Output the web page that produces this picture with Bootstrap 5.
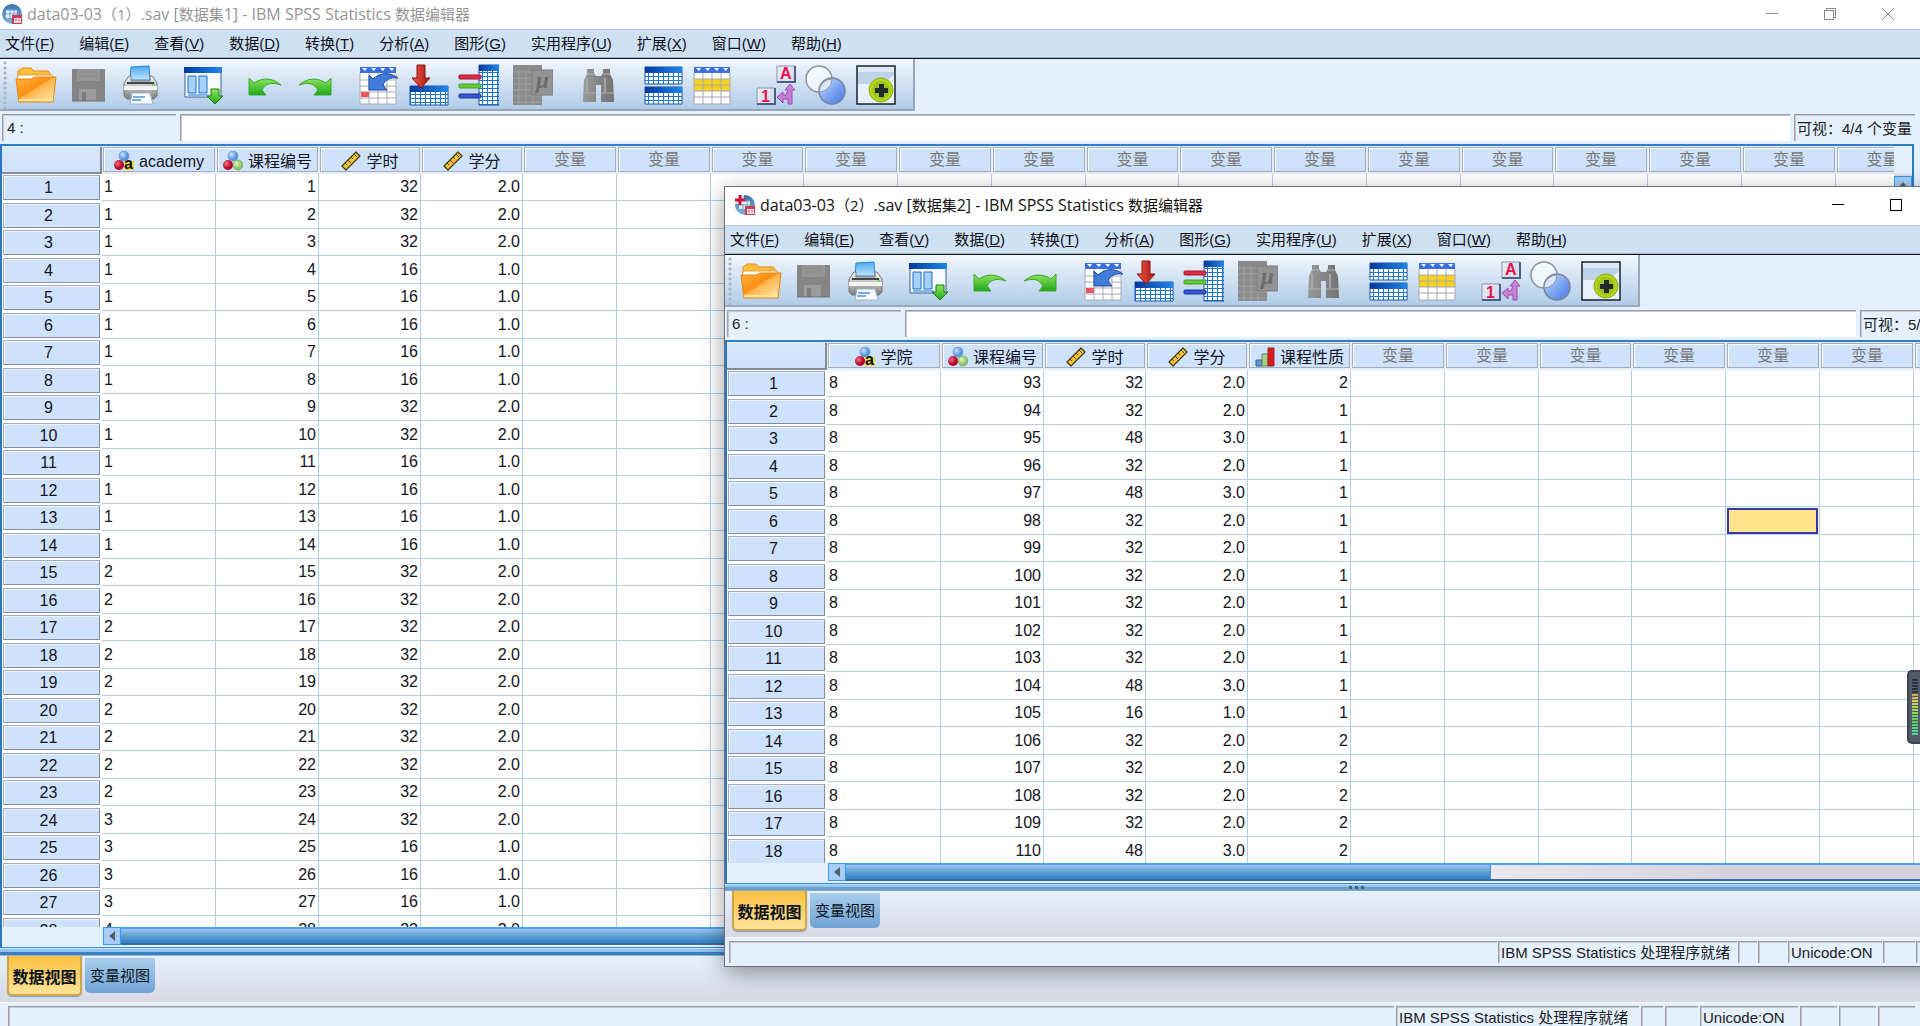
<!DOCTYPE html>
<html lang="zh-CN">
<head>
<meta charset="utf-8">
<meta name="viewport" content="width=device-width, initial-scale=1">
<title>IBM SPSS Statistics 数据编辑器</title>
<link href="https://cdn.jsdelivr.net/npm/bootstrap@5.3.0/dist/css/bootstrap.min.css" rel="stylesheet">
<style>
  :root { --pane: #e4f0fc; --line: #b0cdea; --head: #cfe2fb; --edge: #9ba0a8; }
  body { height: 100vh; overflow: hidden; background: var(--pane); color: #14141e;
         font: 15px/20px "Liberation Sans", "Noto Sans CJK SC", sans-serif; }
  button { color: inherit; font: inherit; }
  .win { background: var(--pane); }
  .win-front { position: absolute; left: 725px; top: 187px; right: -66px; bottom: 60px; z-index: 2;
         box-shadow: 0 0 0 1px #6d7077, 0 6px 22px rgba(0,0,0,.42); }
  .titlebar { height: 29px; background: #fff; color: #959595; padding: 0 3px 2px 2px;
         font-family: "Open Sans", "Noto Sans CJK SC", sans-serif; font-size: 15px; }
  .titlebar span { font-size: 16px; }
  .caption-text { padding-left: 5px; }
  .win-front .titlebar { height: 38px; color: #111; padding-left: 10px; }
  .ctl { width: 58px; height: 26px; border: 0; background: none; padding: 0; line-height: 0; }
  .menubar { height: 30px; background: #cee1f2; border-top: 1px solid #b3cade; border-bottom: 1px solid #14181c;
         box-shadow: inset 0 -1px #9db4cb; padding-left: 5px; gap: 25px; }
  .menubar a { color: #101018; text-decoration: none; white-space: nowrap; }
  .tools { height: 52px; align-self: flex-start; gap: 20px; padding: 2px 16px 0 3px;
         background: linear-gradient(#f2f7fd, #d3e3f4 45%, #b1cce8); border-right: 2px solid #99a7b7; border-bottom: 2px solid #99a7b7; }
  .grip { width: 4px; height: 48px; margin-right: -12px; background: radial-gradient(circle at 2px 2px, #a9b5c3 1px, transparent 2px) 0 0/4px 5px; }
  .tgroup { gap: 8px; }
  .tgroup-wide { gap: 10px; }
  .tool { width: 42px; height: 42px; padding: 0; border: 0; background: none; line-height: 0; }
  .formula { height: 33px; padding: 3px 5px 3px 2px; gap: 4px; }
  .sunk { border: 0; border-top: 1px solid var(--edge); border-left: 1px solid var(--edge); border-radius: 0;
         box-shadow: inset 1px 1px #c3c7cc; background: var(--pane); color: #202028; padding: 0 4px; font: inherit; outline: 0; }
  .cellref { width: 174px; }
  .formula .entry { background-color: #fff; }
  .visible-vars { width: 121px; padding-left: 2px; line-height: 28px; white-space: nowrap; overflow: hidden; }
  .gridbox { margin-right: 6px; border: 2px solid #2a78c4; border-top-color: #2c7fce; border-bottom: 0; background: #fff; }
  .sheet { table-layout: fixed; border-collapse: separate; border-spacing: 0; width: 0; font-size: 16px; }
  .sheet th, .sheet td { padding: 0; font-weight: 400; white-space: nowrap; }
  .sheet thead th { height: 28px; background: #e6edf5; }
  .cap { height: 25px; margin: 1px 1px 2px 1px; background: var(--head); gap: 5px; line-height: 23px;
         border: 1px solid #a3adbd; box-shadow: inset 1px 1px #fff; }
  .cap-var { padding-top: 3px; }
  .cap-blank { color: #777; }
  .corner { height: 27px; background: linear-gradient(#d8e8fb, var(--head)); border-right: 2px solid #848c98; border-bottom: 2px solid #848c98; }
  .sheet tbody tr { height: 27px; }
  .sheet tbody tr:nth-child(even) { height: 28px; }
  .sheet tbody td { border-right: 1px solid var(--line); border-bottom: 1px solid var(--line); padding: 0 2px; line-height: 24px; text-align: right; }
  .sheet tbody td.txt { text-align: left; }
  .rowno { height: 25px; margin: 0 2px 0 1px; background: var(--head); border: 1px solid #a3adbd; border-right-color: #858e9e; border-bottom-color: #858e9e;
         box-shadow: inset 1px 1px #eef5ff; text-align: center; line-height: 24px; padding-right: 6px; }
  .sheet tbody td.picked { padding: 0 1px; }
  .picked div { height: 26px; background: #fee58c; border: 2px solid #3a36ac; }
  .vscroll { width: 18px; background: #dcdce6; }
  .vscroll .spare { height: 28px; background: var(--pane); }
  .arrow { width: 18px; height: 18px; border: 1px solid #3399f5; background: #a5cdf8; padding: 0; line-height: 0; }
  .hscroll { height: 20px; padding: 0 0 2px 101px; background: var(--pane); }
  .track { background: linear-gradient(90deg, #f1eff4 50%, #d5d2dd 78%); border-top: 2px solid #48a2f6; border-bottom: 2px solid #3a6aa0; }
  .thumb { height: 14px; background: linear-gradient(#9cc4e6, #5f9fd4 50%, #3480c2); border-right: 1px solid #3c93e2; }
  .win-front .thumb { width: 57%; }
  .splitter { height: 9px; background: linear-gradient(#3c8bd4 0 1px, #c5e8ff 1px 2px, #8ec4f7 2px 5px, #3e7fbf 5px 8px, #8fb5d9 8px); line-height: 0; }
  .win-front .splitter { height: 8px; background: linear-gradient(#3c8bd4 0 1px, #b0dcff 1px 2px, #93c7f7 2px 4px, #6f9cc9 4px 7px, #7da8d3 7px); }
  .views { height: 46px; padding-left: 7px; gap: 3px; background: linear-gradient(#e5f1fd, #d9d8e5); }
  .view { height: 35px; width: 70px; border: 0; background: linear-gradient(#a9cdec, #70a3d3); border-radius: 0 0 5px 5px; color: #0b1420; padding: 0; margin-top: 2px; white-space: nowrap; }
  .view.on { height: 40px; width: 75px; margin-top: 0; font-weight: 700; font-size: 16px; padding-top: 6px;
         background: linear-gradient(#fdc040, #fee29a); border: 2px solid #d0a645; border-top: 0; box-shadow: 0 1px 1px #6fa4d6; }
  .status { height: 24px; padding: 3px 5px 0 8px; gap: 2px; border-top: 1px solid #f4f9ff; }
  .status .sunk { height: 21px; padding-left: 2px; line-height: 22px; white-space: nowrap; }
  .win-front .status { height: 29px; padding: 3px 5px 4px 4px; gap: 1px; }
  .win-front .status .sunk { height: 22px; }
  .s-proc { width: 243px; } .s-a { width: 22px; } .s-b { width: 33px; } .s-uni { width: 98px; } .s-c { width: 37px; }
  .win-front .s-proc { width: 239px; } .win-front .s-a { width: 19px; } .win-front .s-b { width: 29px; }
  .win-front .s-uni { width: 94px; } .win-front .s-c { width: 32px; }
  .t-mu { font: italic 700 23px "Liberation Serif", serif; fill: #6a6a6a; }
  .t-tile { font: 700 16px "Liberation Sans", sans-serif; fill: #e80f50; }
  .t-a { font: 700 16px "Liberation Sans", sans-serif; fill: #111; }
  .meter { position: absolute; right: 0; top: 670px; width: 13px; height: 74px; z-index: 3; background: #555a6b; border: 2px solid #3f4352; border-right: 0;
         border-radius: 5px 0 0 5px; padding: 7px 0 0 3px; }
  .meter i { display: block; height: 2px; width: 6px; margin-bottom: 1px; }
</style>
</head>
<body>

<svg width="0" height="0" class="position-absolute" aria-hidden="true">
  <defs>
    <linearGradient id="gOrange" x2="1" y2="1"><stop stop-color="#ffb340"/><stop offset=".45" stop-color="#ff8f12"/><stop offset=".5" stop-color="#ffb64d"/><stop offset="1" stop-color="#ffeab0"/></linearGradient>
    <linearGradient id="gBlue"><stop stop-color="#05389c"/><stop offset="1" stop-color="#1f86e8"/></linearGradient>
    <linearGradient id="gGreen" x2="0" y2="1"><stop stop-color="#8fe85e"/><stop offset="1" stop-color="#1fa51a"/></linearGradient>
    <linearGradient id="gRed"><stop stop-color="#f0604c"/><stop offset="1" stop-color="#a30f0f"/></linearGradient>
    <linearGradient id="gPaper" x2="0" y2="1"><stop stop-color="#4aa8f2"/><stop offset="1" stop-color="#c3e6ff"/></linearGradient>
    <linearGradient id="gMetal" x2="0" y2="1"><stop stop-color="#f7f7f7"/><stop offset=".5" stop-color="#bdbdbd"/><stop offset="1" stop-color="#7d7d7d"/></linearGradient>
    <linearGradient id="gGray"><stop stop-color="#9b9b9b"/><stop offset=".5" stop-color="#858585"/><stop offset="1" stop-color="#737373"/></linearGradient>
    <linearGradient id="gGlobe" x2="0" y2="1"><stop stop-color="#3973a6"/><stop offset="1" stop-color="#86b5dd"/></linearGradient>
    <radialGradient id="bBlue" cx=".35" cy=".35"><stop stop-color="#c9e2ff"/><stop offset="1" stop-color="#5596e0"/></radialGradient>
    <radialGradient id="bRed" cx=".35" cy=".35"><stop stop-color="#f0708a"/><stop offset="1" stop-color="#b5001f"/></radialGradient>
    <radialGradient id="bGreen" cx=".35" cy=".35"><stop stop-color="#e2f7c4"/><stop offset="1" stop-color="#8cc465"/></radialGradient>
    <linearGradient id="gLens" x2="1" y2="1"><stop stop-color="#c4dcff"/><stop offset="1" stop-color="#3f74e4"/></linearGradient>
    <linearGradient id="gTile" x2="1" y2="1"><stop stop-color="#fff"/><stop offset="1" stop-color="#b9c6dc"/></linearGradient>
    <pattern id="pGrid" width="5" height="4" patternUnits="userSpaceOnUse"><path fill="#1d78d4" d="M0 0h5v4H0z"/><path fill="#fff" d="M1 1h4v3H1z"/></pattern>
  </defs>
  <symbol id="i-open" viewBox="0 0 42 42"><path d="M3 20V7l4-3h9l3 3h14l2 2v10z" fill="#ffbf3a" stroke="#e58a12"/><path d="M3 11h34l1 7H2z" fill="#fff" stroke="#e89a40"/><path d="M1 15h15l4-2h21l-3 25H4z" fill="url(#gOrange)" stroke="#ec8412"/><path d="M4 36h33" stroke="#ffe7a2" stroke-width="2"/></symbol>
  <symbol id="i-save" viewBox="0 0 42 42"><path d="M5 5h33v32H5z" fill="#858585"/><path d="M10 5h23v12H10z" fill="#959595"/><path d="M13 8h17M13 12h17" stroke="#878787"/><path d="M12 25h17v12H12z" fill="#9c9c9c"/><path d="M15 28h4v9h-4z" fill="#7d7d7d"/><path d="M5 37h33" stroke="#6f6f6f"/></symbol>
  <symbol id="i-print" viewBox="0 0 42 42"><path d="M12 3l18-1 1 14H11z" fill="url(#gPaper)" stroke="#2d86d2"/><path d="M5 19l5-7h2v5h19v-5h2l5 7v13l-3 3H8l-3-3z" fill="url(#gMetal)" stroke="#777"/><path d="M8 19h27" stroke="#444" stroke-width="2"/><path d="M5 22h33v4H5z" fill="#f3f3f3"/><path d="M33 20h3v2h-3z" fill="#6fe04c"/><path d="M13 29h18l3 11H11z" fill="#f6fbff" stroke="#9fb4c6"/><path d="M14 33h12M13 36h9" stroke="#79aede" stroke-width="2"/></symbol>
  <symbol id="i-vars" viewBox="0 0 42 42"><path d="M4 4h36v29H4z" fill="#f8fbff" stroke="#3a5f9c"/><path d="M3 3h38v6H3z" fill="url(#gBlue)"/><path d="M7 12h8v17H7zM18 12h8v17h-8z" fill="#a4d2fb" stroke="#1b71c8"/><path d="M7 31h21" stroke="#1b71c8"/><path d="M30 25h8v7h4l-8 8-8-8h4z" fill="url(#gGreen)" stroke="#147a12"/></symbol>
  <symbol id="i-undo" viewBox="0 0 42 42"><path d="M6 14l5 5c9-6 19-5 27 2-9-3-15-2-19 5l4 5H6z" fill="url(#gGreen)" stroke="#3fa62c" stroke-linejoin="round"/></symbol>
  <symbol id="i-goto" viewBox="0 0 42 42"><path d="M3 3h36v37H3z" fill="#fff"/><path d="M3 3h36v6H3z" fill="#3a6fe0"/><path d="M5 4h5l-2 3zM14 4h5l-2 3zM23 4h5l-2 3zM32 4h5l-2 3z" fill="#fff"/><path d="M3 9v31h36V9M3 16h36M3 22h36M3 28h36M3 34h36M12 9v31M21 9v31M30 9v31" fill="none" stroke="#a9acb8"/><path d="M4 28h8v5H4z" fill="#f0525f"/><path d="M12 11l4 4c8-7 17-7 25-1-8-1-13 2-15 7l4 5H12z" fill="#3f7ddb" stroke="#214f9f"/></symbol>
  <symbol id="i-insert" viewBox="0 0 42 42"><g transform="translate(3 22)"><path d="M0 0h38v19H0z" fill="url(#pGrid)" stroke="#1a54a6"/><path d="M0 0h38v6H0z" fill="url(#gBlue)"/></g><path d="M10 1h8v13h5l-9 10-9-10h5z" fill="url(#gRed)" stroke="#8c1010"/></symbol>
  <symbol id="i-var" viewBox="0 0 42 42"><path d="M22 1h20v40H22z" fill="url(#pGrid)" stroke="#1a54a6"/><path d="M22 1h20v6H22z" fill="url(#gBlue)"/><rect x="2" y="11" width="22" height="4" rx="1" fill="#dd2b45" stroke="#a91631"/><rect x="2" y="20" width="22" height="4" rx="1" fill="#62cb3b" stroke="#3f9d25"/><rect x="2" y="30" width="22" height="4" rx="1" fill="#3557d0" stroke="#1e37a0"/></symbol>
  <symbol id="i-mu" viewBox="0 0 42 42"><path d="M2 1h29v40H2z" fill="#8b8b8b"/><path d="M2 8h29M2 14h29M2 20h29M2 26h29M2 32h29M2 38h29M8 6v35M15 6v35M22 6v35" stroke="#a3a3a3"/><path d="M21 6h21v25H21z" fill="#939393" stroke="#7c7c7c"/></symbol>
  <symbol id="i-find" viewBox="0 0 42 42"><path d="M10 5h7v4l2 3h5l2-3V5h7v5l3 6 1 22H24V21h-5v17H6l1-22 3-6z" fill="url(#gGray)"/><path d="M7 29h12M24 29h13M10 10h7M26 10h7" stroke="#b2b2b2"/><path d="M10 14v14M28 14v14" stroke="#a5a5a5" stroke-width="2"/></symbol>
  <symbol id="i-split" viewBox="0 0 42 42"><g id="halfTable"><path d="M2 3h37v17H2z" fill="url(#pGrid)" stroke="#1a54a6"/><path d="M2 3h37v6H2z" fill="url(#gBlue)"/></g><use href="#halfTable" y="20"/></symbol>
  <symbol id="i-weight" viewBox="0 0 42 42"><path d="M1 3h36v37H1z" fill="#fff"/><path d="M1 3h36v6H1z" fill="#3a6fe0"/><path d="M3 4h5l-2 3zM12 4h5l-2 3zM21 4h5l-2 3zM30 4h5l-2 3z" fill="#fff"/><path d="M1 15h36v12H1z" fill="#f8d21c"/><path d="M1 9v31h36V9M1 15h36M1 21h36M1 27h36M1 33h36M10 9v31M19 9v31M28 9v31" fill="none" stroke="#a4a8b4"/></symbol>
  <symbol id="i-labels" viewBox="0 0 42 42"><path d="M22 2h18v16H22zM2 24h18v16H2z" fill="url(#gTile)" stroke="#8a97b2"/><path d="M40 2v16H22M20 24v16H2" fill="none" stroke="#4d5f86" stroke-width="2"/><path d="M35 20l5 6h-3v14h-4v-5h-5v4l-6-6 6-5v3h3l2-5h-3z" fill="#c780d6" stroke="#9a4fae"/></symbol>
  <symbol id="i-sets" viewBox="0 0 42 42"><circle cx="14" cy="15" r="13" fill="#f7faff" fill-opacity=".8" stroke="#8b93a0" stroke-width="1.500"/><circle cx="27" cy="27" r="13" fill="url(#gLens)" stroke="#7a8598" stroke-width="1.500"/><path d="M14 28a13 13 0 0 1 13-13 13 13 0 0 1-13 13z" fill="#dce6f5" stroke="#8b93a0"/></symbol>
  <symbol id="i-plus" viewBox="0 0 42 42"><path d="M2 2h38v38H2z" fill="#e6f1fd"/><path d="M3 3h36v8L28 20H3z" fill="#bdd3ea"/><path d="M3 3h36v5H3z" fill="#dfeaf6"/><path d="M2 2h38v38H2z" fill="none" stroke="#1c2026" stroke-width="1.500"/><circle cx="26" cy="26" r="12" fill="#b3d417" stroke="#8cab1a"/><circle cx="26" cy="26" r="9" fill="#9cc41f"/><path d="M24 20h5v4h4v5h-4v4h-5v-4h-4v-5h4z" fill="#26292c"/></symbol>
  <symbol id="i-app" viewBox="0 0 20 20"><circle cx="10" cy="10" r="10" fill="url(#gGlobe)"/><path d="M4 6h11v8H4z" fill="#e9f3fc"/><path d="M4 6h11M4 10h11M8 6v8M12 6v8" stroke="#6c9fce"/><path d="M10 11h10v9H10z" fill="#d23b57"/><path d="M12 14h7v5h-7z" fill="#fff"/><path d="M12 16h7M14 14v5M17 14v5" stroke="#e2899a"/></symbol>
  <symbol id="i-app-new" viewBox="0 0 20 20"><use href="#i-app"/><path d="M0 0h9v9H0z" fill="#fff" opacity=".7"/><path d="M5 0v10M0 5h10" stroke="#cf1238" stroke-width="3"/></symbol>
  <symbol id="m-nominal" viewBox="0 0 20 20"><circle cx="10" cy="5" r="5" fill="url(#bBlue)" stroke="#5a8cc8" stroke-width=".6"/><circle cx="5" cy="14" r="5" fill="url(#bRed)"/><circle cx="15" cy="14" r="5" fill="url(#bGreen)" stroke="#6f9f4c" stroke-width=".6"/></symbol>
  <symbol id="m-string" viewBox="0 0 20 20"><circle cx="10" cy="5" r="5" fill="url(#bBlue)" stroke="#5a8cc8" stroke-width=".6"/><circle cx="5" cy="14" r="5" fill="url(#bRed)"/><path d="M10 10h10v9H10z" fill="#f5d64a"/></symbol>
  <symbol id="m-scale" viewBox="0 0 20 20"><path d="M1 15L15 1l4 4L5 19z" fill="#f2c52c" stroke="#3f3a20" stroke-width="1.2" stroke-linejoin="round"/><path d="M4 12l2 2M7 9l3 3M10 6l2 2M13 3l3 3" stroke="#4a431f"/></symbol>
  <symbol id="m-ordinal" viewBox="0 0 20 20"><path d="M1 13h6v6H1z" fill="#5d98d8" stroke="#41648f"/><path d="M7 7h6v12H7z" fill="#a8cf85" stroke="#66844e"/><path d="M13 1h6v18h-6z" fill="#dc1818" stroke="#8f3030"/></symbol>
</svg>

<template id="menuTpl">
  <nav class="menubar d-flex align-items-center" aria-label="菜单">
    <a href="#">文件(<u>F</u>)</a><a href="#">编辑(<u>E</u>)</a><a href="#">查看(<u>V</u>)</a><a href="#">数据(<u>D</u>)</a><a href="#">转换(<u>T</u>)</a><a href="#">分析(<u>A</u>)</a><a href="#">图形(<u>G</u>)</a><a href="#">实用程序(<u>U</u>)</a><a href="#">扩展(<u>X</u>)</a><a href="#">窗口(<u>W</u>)</a><a href="#">帮助(<u>H</u>)</a>
  </nav>
  <div class="tools d-flex align-items-center" role="toolbar">
    <span class="grip"></span>
    <div class="tgroup-wide d-flex">
      <button class="tool" aria-label="打开"><svg width="42" height="42"><use href="#i-open"/></svg></button>
      <button class="tool" aria-label="保存" disabled><svg width="42" height="42"><use href="#i-save"/></svg></button>
      <button class="tool" aria-label="打印"><svg width="42" height="42"><use href="#i-print"/></svg></button>
    </div>
    <button class="tool" aria-label="重新调用对话框"><svg width="42" height="42"><use href="#i-vars"/></svg></button>
    <div class="tgroup-wide d-flex">
      <button class="tool" aria-label="撤销"><svg width="42" height="42"><use href="#i-undo"/></svg></button>
      <button class="tool" aria-label="重做"><svg width="42" height="42"><g transform="matrix(-1 0 0 1 42 0)"><use href="#i-undo"/></g></svg></button>
    </div>
    <div class="tgroup d-flex">
      <button class="tool" aria-label="转到个案"><svg width="42" height="42"><use href="#i-goto"/></svg></button>
      <button class="tool" aria-label="转到变量"><svg width="42" height="42"><use href="#i-insert"/></svg></button>
      <button class="tool" aria-label="变量"><svg width="42" height="42"><use href="#i-var"/></svg></button>
      <button class="tool ms-1" aria-label="描述统计" disabled><svg width="42" height="42"><use href="#i-mu"/><text class="t-mu" x="25" y="24">μ</text></svg></button>
    </div>
    <button class="tool ms-1 me-1" aria-label="查找"><svg width="42" height="42"><use href="#i-find"/></svg></button>
    <div class="tgroup d-flex">
      <button class="tool" aria-label="拆分文件"><svg width="42" height="42"><use href="#i-split"/></svg></button>
      <button class="tool" aria-label="选择个案"><svg width="42" height="42"><use href="#i-weight"/></svg></button>
    </div>
    <div class="tgroup d-flex">
      <button class="tool" aria-label="值标签"><svg width="42" height="42"><use href="#i-labels"/><text class="t-tile" x="25" y="15">A</text><text class="t-tile" x="6" y="38">1</text></svg></button>
      <button class="tool" aria-label="使用变量集"><svg width="42" height="42"><use href="#i-sets"/></svg></button>
      <button class="tool" aria-label="定制工具栏"><svg width="42" height="42"><use href="#i-plus"/></svg></button>
    </div>
  </div>
</template>

<template id="footTpl">
  <div class="hscroll d-flex flex-shrink-0">
    <button class="arrow flex-shrink-0" aria-label="向左滚动"><svg width="16" height="16"><path d="M11 3v10L5 8z" fill="#555f6b"/></svg></button>
    <div class="track flex-grow-1"><div class="thumb"></div></div>
  </div>
</template>

<template id="viewsTpl">
  <div class="splitter flex-shrink-0 text-center"><svg width="18" height="8"><path d="M2 3h3v3H2zM8 3h3v3H8zM14 3h3v3h-3z" fill="#4a5f7c"/></svg></div>
  <div class="views d-flex align-items-start flex-shrink-0">
    <button class="view on">数据视图</button>
    <button class="view">变量视图</button>
  </div>
  <div class="status d-flex flex-shrink-0">
    <div class="sunk flex-grow-1"></div>
    <div class="sunk s-proc">IBM SPSS Statistics 处理程序就绪</div>
    <div class="sunk s-a"></div>
    <div class="sunk s-b"></div>
    <div class="sunk s-uni">Unicode:ON</div>
    <div class="sunk s-c"></div><div class="sunk s-c"></div><div class="sunk s-c"></div>
  </div>
</template>

<main class="win d-flex flex-column vh-100 overflow-hidden" data-set="one">
  <header class="titlebar d-flex align-items-center flex-shrink-0">
    <svg width="20" height="20" class="flex-shrink-0"><use href="#i-app"/></svg>
    <div class="caption-text flex-grow-1"><span>data03-03</span>（1）<span>.sav [</span>数据集<span>1] - IBM SPSS Statistics </span>数据编辑器</div>
    <button class="ctl" aria-label="最小化"><svg width="12" height="12"><path d="M0 5h12v1H0z" fill="#8c8c8c"/></svg></button>
    <button class="ctl" aria-label="还原"><svg width="12" height="12"><path fill="#8c8c8c" fill-rule="evenodd" d="M0 2h10v10H0zM1 3v8h8V3zM2 0h10v10h-2V9h1V1H3v1H2z"/></svg></button>
    <button class="ctl" aria-label="关闭"><svg width="12" height="12"><path d="M0 0l12 12M12 0L0 12" stroke="#8c8c8c"/></svg></button>
  </header>
  <div data-slot="menu" class="d-flex flex-column flex-shrink-0"></div>
  <div class="formula d-flex flex-shrink-0">
    <input class="sunk cellref" value="4 :" aria-label="单元格" readonly>
    <input class="sunk entry flex-grow-1" aria-label="单元格编辑器">
    <div class="sunk visible-vars">可视：4/4 个变量</div>
  </div>
  <section class="gridbox d-flex flex-column flex-grow-1 overflow-hidden">
    <div class="d-flex flex-grow-1 overflow-hidden">
      <div class="flex-grow-1 overflow-hidden"><table class="sheet"></table></div>
      <div class="vscroll flex-shrink-0"><div class="spare"></div><button class="arrow" aria-label="向上滚动"><svg width="16" height="16"><path d="M3 11h10L8 5z" fill="#555f6b"/></svg></button></div>
    </div>
    <div data-slot="foot"></div>
  </section>
  <div data-slot="views"></div>
</main>

<aside class="win win-front d-flex flex-column" data-set="two">
  <header class="titlebar d-flex align-items-center flex-shrink-0">
    <svg width="20" height="20" class="flex-shrink-0"><use href="#i-app-new"/></svg>
    <div class="caption-text flex-grow-1"><span>data03-03</span>（2）<span>.sav [</span>数据集<span>2] - IBM SPSS Statistics </span>数据编辑器</div>
    <button class="ctl" aria-label="最小化"><svg width="12" height="12"><path d="M0 5h12v1H0z" fill="#000"/></svg></button>
    <button class="ctl" aria-label="最大化"><svg width="12" height="12"><rect width="12" height="12" fill="none" stroke="#000" stroke-width="2"/></svg></button>
    <button class="ctl" aria-label="关闭"><svg width="12" height="12"><path d="M0 0l12 12M12 0L0 12" stroke="#000"/></svg></button>
  </header>
  <div data-slot="menu" class="d-flex flex-column flex-shrink-0"></div>
  <div class="formula d-flex flex-shrink-0">
    <input class="sunk cellref" value="6 :" aria-label="单元格" readonly>
    <input class="sunk entry flex-grow-1" aria-label="单元格编辑器">
    <div class="sunk visible-vars">可视：5/5 个变量</div>
  </div>
  <section class="gridbox d-flex flex-column flex-grow-1 overflow-hidden">
    <div class="d-flex flex-grow-1 overflow-hidden">
      <div class="flex-grow-1 overflow-hidden"><table class="sheet"></table></div>
      <div class="vscroll flex-shrink-0"></div>
    </div>
    <div data-slot="foot"></div>
  </section>
  <div data-slot="views"></div>
</aside>

<div class="meter" id="meter"></div>

<script>
  const academy = [1,1,1,1,1,1,1,1,1,1,1,1,1,1,2,2,2,2,2,2,2,2,2,3,3,3,3,4];
  const hours1 = [32,32,32,16,16,16,16,16,32,32,16,16,16,16,32,32,32,32,32,32,32,32,32,32,16,16,16,32];
  const hours2 = [32,32,48,32,48,32,32,32,32,32,32,48,16,32,32,32,32,48];
  const kind2 = [2,1,1,1,1,1,1,1,1,1,1,1,1,2,2,2,2,2];
  const credit = h => (h / 16).toFixed(1);
  const sets = {
    one: { vars: [['m-string','academy'],['m-nominal','课程编号'],['m-scale','学时'],['m-scale','学分']], blanks: 15,
           rows: hours1.map((h, i) => [academy[i], i + 1, h, credit(h)]) },
    two: { vars: [['m-string','学院'],['m-nominal','课程编号'],['m-scale','学时'],['m-scale','学分'],['m-ordinal','课程性质']], blanks: 7,
           rows: hours2.map((h, i) => [8, 93 + i, h, credit(h), kind2[i]]), picked: [5, 9] }
  };
  const widths = [114, 103, 102, 102, 103], blankWidths = [94, 94, 93, 94];
  const letter = { 'm-string': '<text class="t-a" x="10" y="18">a</text>' };

  document.querySelectorAll('[data-set]').forEach(win => {
    for (const slot of ['menu', 'foot', 'views'])
      win.querySelector(`[data-slot=${slot}]`).append(document.getElementById(slot + 'Tpl').content.cloneNode(true));

    const set = sets[win.dataset.set], blanks = [...Array(set.blanks).keys()];
    const cols = [100, ...set.vars.map((v, i) => widths[i]), ...blanks.map(i => blankWidths[i % 4])];
    let html = '<colgroup>' + cols.map(w => `<col style="width:${w}px">`).join('') + '</colgroup><thead><tr><th><div class="corner"></div></th>';
    html += set.vars.map(([icon, name]) => `<th scope="col"><div class="cap cap-var d-flex align-items-center justify-content-center"><svg width="20" height="20" class="overflow-visible"><use href="#${icon}"/>${letter[icon] || ''}</svg><span>${name}</span></div></th>`).join('');
    html += blanks.map(() => '<th scope="col"><div class="cap cap-blank text-center"><span>变量</span></div></th>').join('') + '</tr></thead><tbody>';
    set.rows.forEach((row, r) => {
      html += `<tr><th scope="row"><div class="rowno">${r + 1}</div></th>` + row.map((v, c) => `<td${c ? '' : ' class="txt"'}>${v}</td>`).join('');
      html += blanks.map(b => set.picked && set.picked[0] === r && set.picked[1] === b + row.length ? '<td class="picked"><div></div></td>' : '<td></td>').join('') + '</tr>';
    });
    const table = win.querySelector('.sheet');
    table.innerHTML = html + '</tbody>';
  });

  document.getElementById('meter').innerHTML = Array.from({ length: 19 }, (_, i) =>
    `<i style="background:${i < 5 ? '#2f323e' : `hsl(${40 + (i - 5) * 9} 60% 58%)`}"></i>`).join('');
</script>
<script src="https://cdn.jsdelivr.net/npm/bootstrap@5.3.0/dist/js/bootstrap.bundle.min.js"></script>
</body>
</html>
